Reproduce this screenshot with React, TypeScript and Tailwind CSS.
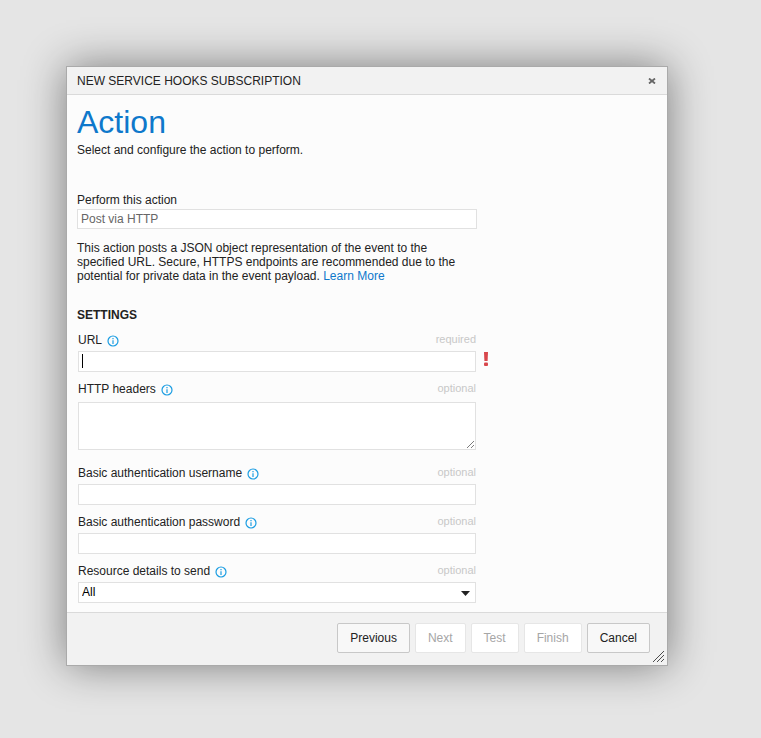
import type { ReactNode } from "react";

const inputClass =
  "block h-[21px] w-full border border-[#e1e1e1] bg-white px-[3px] outline-none";

function InfoIcon() {
  return (
    <svg className="mt-[2px] h-3 w-3 shrink-0" viewBox="0 0 12 12" fill="none" aria-hidden="true">
      <circle cx="6" cy="6" r="5" stroke="#1b9de2" strokeWidth="1.2" />
      <path d="M6 5.2V9M6 3.1V4.3" stroke="#1b9de2" strokeWidth="1.2" />
    </svg>
  );
}

type FieldProps = {
  id: string;
  label: string;
  hint: string;
  children: ReactNode;
};

function Field({ id, label, hint, children }: FieldProps) {
  return (
    <div className="flex flex-col gap-1">
      <div className="flex h-[14px] items-start justify-between">
        <label htmlFor={id} className="flex gap-[5px]">
          {label}
          <InfoIcon />
        </label>
        <span className="text-[11px] leading-[12px] text-[#c8c8c8]">{hint}</span>
      </div>
      {children}
    </div>
  );
}

function FooterButton({ children, disabled = false }: { children: ReactNode; disabled?: boolean }) {
  return (
    <button
      type="button"
      disabled={disabled}
      className="h-[30px] rounded-[2px] border border-[#c8c8c8] bg-[#f8f8f8] px-3 text-[#222222] disabled:border-[#e6e6e6] disabled:bg-white disabled:text-[#a6a6a6]"
    >
      {children}
    </button>
  );
}

export default function App() {
  return (
    <main className="min-h-screen bg-[#e5e5e5] pt-[66px] pr-[93px] pb-[72px] pl-[66px] font-['Liberation_Sans',Arial,sans-serif] text-[12px] leading-[14px] text-[#222222]">
      <section
        role="dialog"
        aria-labelledby="dialog-title"
        className="relative border border-[#aaaaaa] bg-[#fcfcfc] shadow-[0_0_40px_rgba(0,0,0,0.46)]"
      >
        <header className="flex h-[28px] items-center justify-between border-b border-[#dadada] bg-[#f2f2f2] px-[10px]">
          <h1 id="dialog-title">NEW SERVICE HOOKS SUBSCRIPTION</h1>
          <button type="button" aria-label="Close" className="flex h-4 w-[10px] items-center justify-center">
            <svg className="h-[6px] w-2" viewBox="0 0 8 6" fill="none" aria-hidden="true">
              <path d="M1 0.5L7 5.5M7 0.5L1 5.5" stroke="#666666" strokeWidth="1.8" />
            </svg>
          </button>
        </header>

        <form className="px-[10px] pt-[9px] pb-[9px]">
          <h2 className="text-[32px] leading-[36px] text-[#0e78cb]">Action</h2>
          <p className="mt-[3px]">Select and configure the action to perform.</p>

          <div className="mt-9 max-w-[400px]">
            <label htmlFor="action">Perform this action</label>
            <input
              id="action"
              readOnly
              defaultValue="Post via HTTP"
              className="mt-[2px] block h-5 w-full border border-[#e1e1e1] bg-white px-[3px] text-[#666666] outline-none"
            />
            <p className="mt-3">
              This action posts a JSON object representation of the event to the specified URL. Secure,
              HTTPS endpoints are recommended due to the potential for private data in the event payload.{" "}
              <a href="#learn-more" className="text-[#0e78cb]">
                Learn More
              </a>
            </p>
          </div>

          <h3 className="mt-[25px] font-bold">SETTINGS</h3>

          <div className="mt-[11px] ml-px flex max-w-[398px] flex-col gap-[10px]">
            <Field id="url" label="URL" hint="required">
              <div className="relative">
                <input id="url" required className={inputClass + " caret-transparent"} />
                <span className="absolute top-[3px] left-1 h-[14px] w-px bg-black" />
                <svg
                  className="absolute top-px -right-3 h-[14px] w-1"
                  viewBox="0 0 4 14"
                  fill="#d8474c"
                  role="img"
                  aria-label="Error"
                >
                  <path d="M0 0H4L3.6 9H0.4Z" />
                  <rect y="10.5" width="4" height="3.5" rx="1" />
                </svg>
              </div>
            </Field>
            <Field id="headers" label="HTTP headers" hint="optional">
              <div className="relative pt-[2px] pb-[6px]">
                <textarea
                  id="headers"
                  className="block h-12 w-full resize-none border border-[#e1e1e1] bg-white px-[3px] outline-none"
                />
                <svg
                  className="absolute right-[2px] bottom-2 h-[7px] w-[7px]"
                  viewBox="0 0 7 7"
                  fill="none"
                  stroke="#444444"
                  aria-hidden="true"
                >
                  <path d="M0 7L7 0M4 7L7 4" strokeWidth="0.7" />
                </svg>
              </div>
            </Field>
            <Field id="username" label="Basic authentication username" hint="optional">
              <input id="username" className={inputClass} />
            </Field>
            <Field id="password" label="Basic authentication password" hint="optional">
              <input id="password" type="password" className={inputClass} />
            </Field>
            <Field id="details" label="Resource details to send" hint="optional">
              <div className="relative">
                <select
                  id="details"
                  className="block h-[21px] w-full appearance-none border border-[#e1e1e1] bg-white px-[3px] pb-[2px] text-black outline-none"
                >
                  <option>All</option>
                </select>
                <svg
                  className="pointer-events-none absolute top-[9px] right-[6px] h-[5px] w-[9px]"
                  viewBox="0 0 9 5"
                  fill="#222222"
                  aria-hidden="true"
                >
                  <path d="M0 0H9L4.5 5Z" />
                </svg>
              </div>
            </Field>
          </div>
        </form>

        <footer className="flex flex-wrap justify-end gap-[5px] border-t border-[#dadada] bg-[#f2f2f2] pt-[10px] pr-[17px] pb-3 pl-[10px]">
          <FooterButton>Previous</FooterButton>
          <FooterButton disabled>Next</FooterButton>
          <FooterButton disabled>Test</FooterButton>
          <FooterButton disabled>Finish</FooterButton>
          <FooterButton>Cancel</FooterButton>
        </footer>
        <svg
          className="absolute right-[3px] bottom-[3px] h-[11px] w-[11px]"
          viewBox="0 0 11 11"
          fill="none"
          stroke="#222222"
          aria-hidden="true"
        >
          <path d="M0 11L11 0M4 11L11 4M8 11L11 8" strokeWidth="0.8" />
        </svg>
      </section>
    </main>
  );
}
